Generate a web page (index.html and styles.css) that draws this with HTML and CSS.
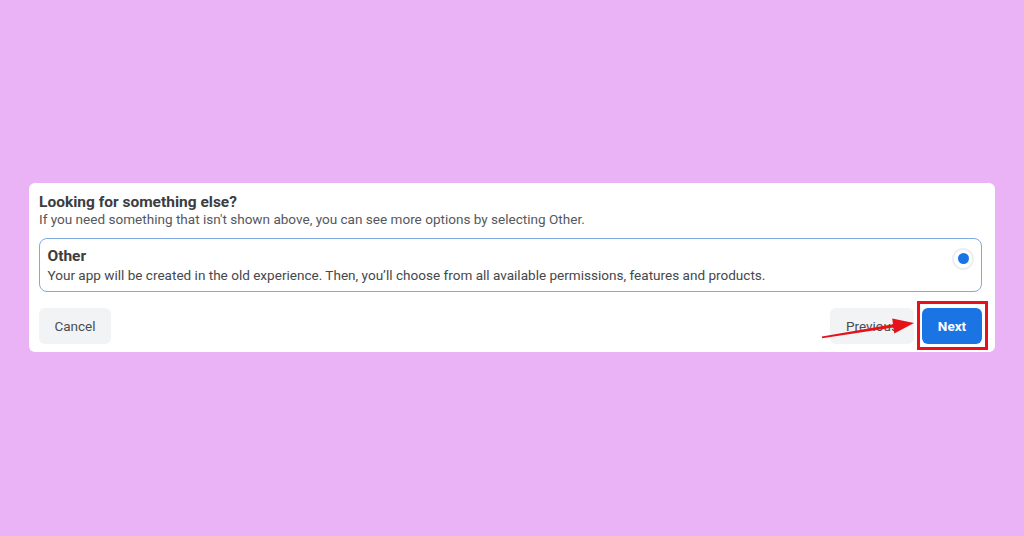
FILE: index.html
```html
<!DOCTYPE html>
<html lang="en">
<head>
<meta charset="utf-8">
<title>Looking for something else?</title>
<link rel="stylesheet" href="styles.css">
</head>
<body>
  <div class="card">
    <h2 class="title">Looking for something else?</h2>
    <p class="sub">If you need something that isn't shown above, you can see more options by selecting Other.</p>
    <div class="option">
      <div class="opt-text">
        <div class="opt-title">Other</div>
        <div class="opt-desc">Your app will be created in the old experience. Then, you’ll choose from all available permissions, features and products.</div>
      </div>
      <span class="radio"><span class="dot"></span></span>
    </div>
    <div class="footer">
      <button class="btn cancel">Cancel</button>
      <div class="actions">
        <button class="btn prev">Previous</button>
        <span class="highlight">
          <button class="btn next">Next</button>
          <span class="ring"></span>
        </span>
      </div>
    </div>
  </div>
  <svg class="arrow" width="100" height="30" viewBox="0 0 100 30" aria-hidden="true">
    <polygon points="4,26.2 75.3,15.6 76.3,21.6 96,11 74.2,6.4 75,12.2 4,24.4" fill="#e6121a"/>
  </svg>
</body>
</html>
```

FILE: styles.css
```css
* { box-sizing: border-box; }

body {
  margin: 0;
  width: 1024px;
  height: 536px;
  background: #e9b3f6;
  font-family: Roboto, "Liberation Sans", Arial, sans-serif;
  position: relative;
  overflow: hidden;
  padding-top: 183px;
}

.card {
  margin-left: 29px;
  width: 966px;
  height: 169px;
  background: #ffffff;
  border-radius: 6px;
  padding: 10px 13px 8px 10px;
}

.title {
  margin: 0;
  font-size: 15.5px;
  line-height: 18px;
  font-weight: 700;
  color: #3b3d40;
}

.sub {
  margin: 0;
  font-size: 13.55px;
  line-height: 17px;
  color: #55585d;
}

.option {
  margin-top: 10px;
  display: flex;
  justify-content: space-between;
  align-items: flex-start;
  border: 1.5px solid #80a9e2;
  border-radius: 8px;
  padding: 7.5px 7px 5.5px 7.5px;
  height: 54px;
}

.opt-title {
  font-size: 15.5px;
  line-height: 18px;
  font-weight: 700;
  color: #3b3d40;
}

.opt-desc {
  margin-top: 2px;
  font-size: 13.55px;
  line-height: 17px;
  color: #45484c;
}

.radio {
  width: 22px;
  height: 22px;
  border-radius: 50%;
  background: #ffffff;
  border: 2px solid #eceef1;
  display: flex;
  align-items: center;
  justify-content: center;
  margin-top: 1px;
}

.dot {
  width: 11px;
  height: 11px;
  border-radius: 50%;
  background: #1b74e4;
}

.footer {
  margin-top: 16px;
  display: flex;
  justify-content: space-between;
  align-items: center;
}

.actions {
  display: flex;
  align-items: center;
  gap: 8px;
}

.btn {
  height: 36px;
  border: none;
  border-radius: 6px;
  font-family: Roboto, "Liberation Sans", Arial, sans-serif;
  font-size: 13.5px;
  padding: 0 15px;
}

.cancel {
  width: 72px;
  background: #f2f3f5;
  color: #4a4c50;
}

.prev {
  width: 84px;
  background: #f2f3f5;
  color: #4a4c50;
  padding: 0 16px;
  text-align: left;
}

.highlight {
  position: relative;
  display: flex;
}

.next {
  width: 60px;
  background: #1b74e4;
  color: #ffffff;
  font-weight: 700;
  padding: 0;
}

.ring {
  position: absolute;
  left: -5px;
  right: -6px;
  top: -7px;
  bottom: -6px;
  border: 3px solid #e8101a;
  pointer-events: none;
}

.arrow {
  position: absolute;
  left: 818px;
  top: 312px;
}
```
